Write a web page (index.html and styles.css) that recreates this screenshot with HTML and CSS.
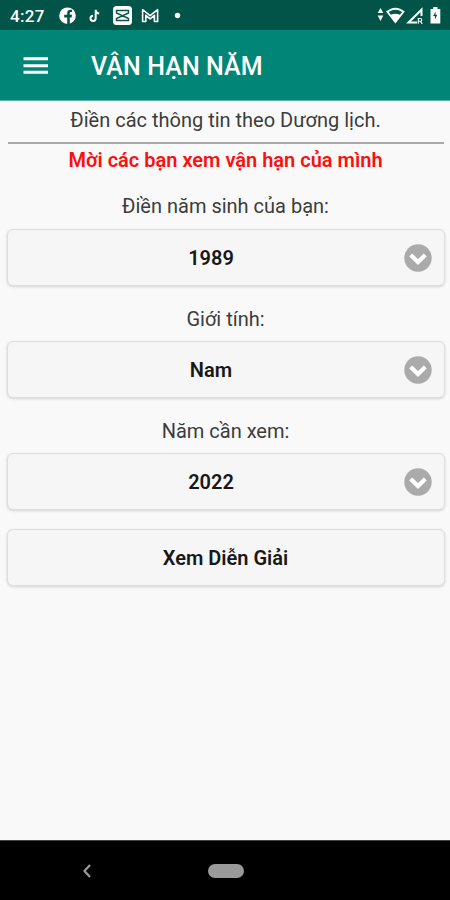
FILE: index.html
```html
<!DOCTYPE html>
<html lang="vi">
<head>
<meta charset="utf-8">
<title>Vận hạn năm</title>
<link rel="stylesheet" href="styles.css">
</head>
<body>
<div class="status">
  <span class="clock">4:27</span>
  <svg class="notifications" width="130" height="30" viewBox="54 0 130 30">
    <circle cx="67.500" cy="15.700" r="8.300" fill="#fff"/>
    <path d="M67.200 24v-6.500h-3v-2.800h3v-2c0-2.300 1.500-3.300 4.800-2.900v2.300c-1.800-.1-2.200.3-2.200 1.300v1.300h2.300l-.5 2.800h-1.800V24z" fill="#005548"/>
    <path d="M95.700 9.700v8.600a2.600 2.600 0 1 1-2.600-2.600M95.700 10.500c.5 1.800 1.700 2.900 3.500 3" fill="none" stroke="#fff" stroke-width="2"/>
    <rect x="113" y="6" width="19" height="19" rx="3.500" fill="#fff"/>
    <path d="M128.500 11.500v-1h-12v2.500l12 5.500v2h-12v-2l12-5.500v-1.500" fill="none" stroke="#0b5549" stroke-width="1.400"/>
    <path d="M142.600 21.500V9.700l7.500 6 7.500-6v11.800h-3.200v-6.200l-4.300 3.500-4.300-3.500v6.200z" fill="#174d44" stroke="#fff" stroke-width="1.600" stroke-linejoin="round"/>
    <circle cx="177.500" cy="15.500" r="2.700" fill="#fff"/>
  </svg>
  <svg class="signals" width="68" height="30" viewBox="374 0 68 30">
    <g fill="#fff">
      <path d="M380.500 8l2.800 5h-5.600zM380.500 21l2.800-5.500h-5.600z"/>
      <path d="M386 11.600q9.400-7.600 18.800 0l-9.400 12z"/>
      <path d="M430.500 9h2.700V7h4.300v2h2.800v14.500h-9.800z"/>
    </g>
    <path d="M388.700 12q6.700-4.300 13.400 0l-2.200 2.800q-4.500-2.300-9 0z" fill="#005548"/>
    <path d="M421.500 16V9.700L408.500 22.600h8.500" fill="none" stroke="#fff" stroke-width="2"/>
    <path d="M418.300 23.800v-5.300h2c2 0 2 2.800 0 2.800h-2m2 0 2 2.500" fill="none" stroke="#fff" stroke-width="1.100"/>
    <path d="M435.500 11.500l-2.300 4.500h1.700v3.500l2.400-4.700h-1.800z" fill="#005548"/>
  </svg>
</div>
<header class="appbar">
  <svg class="menu" width="68" height="20" viewBox="0 0 68 20"><path d="M.5 3.700h24.500M.5 10.700h24.500M.5 17.200h24.500" stroke="#fff" stroke-width="3"/></svg>
  <h1>VẬN HẠN NĂM</h1>
</header>
<main>
  <p class="intro">Điền các thông tin theo Dương lịch.</p>
  <p class="invite">Mời các bạn xem vận hạn của mình</p>
  <p class="label year">Điền năm sinh của bạn:</p>
  <div class="button select"><span>1989</span><svg width="28" height="28" viewBox="0 0 28 28"><circle cx="14" cy="14" r="13.700"/><path d="M6.700 11l7.300 7 7.300-7"/></svg></div>
  <p class="label gender">Giới tính:</p>
  <div class="button select"><span>Nam</span><svg width="28" height="28" viewBox="0 0 28 28"><circle cx="14" cy="14" r="13.700"/><path d="M6.700 11l7.300 7 7.300-7"/></svg></div>
  <p class="label target">Năm cần xem:</p>
  <div class="button select"><span>2022</span><svg width="28" height="28" viewBox="0 0 28 28"><circle cx="14" cy="14" r="13.700"/><path d="M6.700 11l7.300 7 7.300-7"/></svg></div>
  <div class="button submit">Xem Diễn Giải</div>
</main>
<footer class="navbar">
  <svg width="10" height="16" viewBox="0 0 10 16"><path d="M8 2L2.500 8 8 14" fill="none" stroke="#999" stroke-width="2.200"/></svg>
  <div class="home"></div>
</footer>
</body>
</html>
```
FILE: styles.css
```css
* { box-sizing: border-box; }
body {
  margin: 0;
  height: 900px;
  display: flex;
  flex-direction: column;
  background: #f9f9f9;
  color: #3c3c3c;
  font-family: Roboto, "Noto Sans", sans-serif;
  overflow: hidden;
}
p, h1 { margin: 0; }
.status {
  height: 30px;
  display: flex;
  align-items: center;
  padding: 0 8px 0 10px;
  background: #005548;
  color: #fff;
}
.clock { width: 44px; padding-top: 1px; font-size: 17px; font-weight: 500; letter-spacing: .3px; }
.signals { margin-left: auto; }
.appbar {
  height: 71px;
  display: flex;
  align-items: center;
  padding: 0 23px;
  background: #008577;
  border-bottom: 1px solid #65b0a6;
  color: #fff;
}
h1 { padding-top: 4px; font-size: 25px; font-weight: 500; line-height: 30px; letter-spacing: .1px; }
main { flex: 1; padding: 0 5.500px 0 6.500px; text-align: center; }
.intro {
  height: 43px;
  padding-top: 6px;
  margin: 0 1px;
  border-bottom: 2px solid #aaa;
  font-size: 20px;
  line-height: 26px;
}
.invite { padding-top: 3px; color: #fb1010; font-size: 20px; font-weight: 600; line-height: 26px; }
.label { font-size: 20px; line-height: 26px; }
.year { margin: 20px 0 10px; }
.gender, .target { margin: 20px 0 9px; }
.button {
  height: 57px;
  display: flex;
  align-items: center;
  justify-content: center;
  background: #f6f6f6;
  border: 1px solid #dedede;
  border-radius: 6px;
  box-shadow: 0 1px 3px rgba(0, 0, 0, .16);
  color: #181818;
  font-size: 20px;
  font-weight: 600;
}
.select { padding-right: 12px; }
.select span { flex: 1; padding-left: 11px; }
.select circle { fill: #aaa; }
.select path { fill: none; stroke: #fff; stroke-width: 4.200; }
.submit { margin-top: 19px; }
.navbar {
  height: 60px;
  display: flex;
  align-items: center;
  padding-left: 82px;
  border-top: 1px solid #444;
  background: #000;
}
.home { width: 36px; height: 14px; margin-left: 116px; border-radius: 7px; background: #999; }
```
